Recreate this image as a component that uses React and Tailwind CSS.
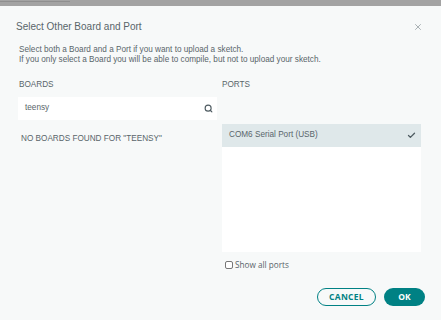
import { Search, X, Check } from 'lucide-react'

const SANS = { fontFamily: '"Liberation Sans", Arial, sans-serif' }

export default function App() {
  return (
    <div className="w-[441px] h-[320px] bg-[#f7f9f9] text-[#59656a] overflow-hidden" style={SANS}>
      {/* backdrop strip */}
      <div className="h-[6px] bg-[#a3a3a3] relative">
        <div className="absolute left-0 top-[1px] w-[70px] h-[1px] bg-[#8f8f8f]" />
      </div>

      {/* header */}
      <div className="flex items-center justify-between pl-[16px] pr-[18px] pt-[3px] h-[38px]">
        <span className="text-[10px]">Select Other Board and Port</span>
        <X size={10} strokeWidth={1.5} className="text-[#7a858a]" />
      </div>

      {/* description */}
      <div className="pl-[19px] pt-[1px] text-[8.2px] leading-[9.5px]">
        <p>Select both a Board and a Port if you want to upload a sketch.</p>
        <p>If you only select a Board you will be able to compile, but not to upload your sketch.</p>
      </div>

      {/* columns */}
      <div className="flex pl-[18px] pt-[15px] gap-[5px]">
        <div className="w-[199px]">
          <p className="pl-[1px] text-[8.2px] h-[12px]">BOARDS</p>
          <div className="mt-[6px] h-[23px] bg-white flex items-center justify-between pl-[7px] pr-[4px]">
            <span className="text-[8.2px]">teensy</span>
            <Search size={9} strokeWidth={3} className="text-[#4e5b61]" />
          </div>
          <p className="mt-[13px] pl-[3px] text-[8.2px]">
            NO BOARDS FOUND FOR "TEENSY"
          </p>
        </div>

        <div className="w-[199px]">
          <p className="text-[8.2px] h-[12px]">PORTS</p>
          <div className="mt-[33px] h-[128px] bg-white">
            <div className="h-[23px] bg-[#dfe8ea] flex items-center justify-between pl-[7px] pr-[5px]">
              <span className="text-[8.2px]">COM6 Serial Port (USB)</span>
              <Check size={9} strokeWidth={3.5} className="text-[#4e5b61]" />
            </div>
          </div>
          <label className="flex items-center gap-[2px] mt-[7px] pl-[3px]">
            <span className="w-[8px] h-[8px] border border-[#777] rounded-[2px] bg-white" />
            <span className="text-[8.2px]" style={{ fontFamily: '"Open Sans", sans-serif' }}>Show all ports</span>
          </label>
        </div>
      </div>

      {/* footer */}
      <div className="flex justify-end gap-[8px] pr-[16px] pt-[17px]" style={{ fontFamily: '"Open Sans", sans-serif' }}>
        <button className="w-[59px] h-[18px] rounded-full border-[1.5px] border-[#008184] text-[#008184] text-[8.5px] font-bold tracking-[0.3px] flex items-center justify-center bg-[#f7f9f9]">
          CANCEL
        </button>
        <button className="w-[41px] h-[18px] rounded-full bg-[#008184] text-white text-[8.5px] font-bold flex items-center justify-center">
          OK
        </button>
      </div>
    </div>
  )
}
